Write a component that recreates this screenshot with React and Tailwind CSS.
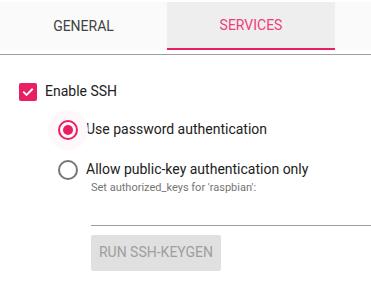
export default function App() {
  return (
    <div className="w-[371px] h-[282px] overflow-hidden bg-white font-['Roboto',sans-serif] text-[#212121]">
      <div className="pt-[2px]">
        <div className="flex h-[48px] bg-[#fafafa]">
          <div className="flex w-[167px] items-center justify-center text-[14px] text-[#424242]">GENERAL</div>
          <div className="flex w-[168px] items-center justify-center border-b-2 border-[#e91e63] bg-[#eeeeee] text-[14px] text-[#ec407a]">
            SERVICES
          </div>
        </div>
      </div>
      <div className="mt-[4px] border-t border-[#9e9e9e]">
        <div className="flex items-center pl-[19px] pt-[26px]">
          <span className="flex h-[18px] w-[18px] items-center justify-center rounded-[2px] bg-[#e91e63]">
            <svg width="14" height="14" viewBox="0 0 24 24" fill="none" stroke="white" strokeWidth="3.2" strokeLinecap="square">
              <path d="M5 12.5l4.5 4.5L19 7.5" />
            </svg>
          </span>
          <span className="ml-[8px] text-[14px]">Enable SSH</span>
        </div>
        <div className="pl-[58px] pt-[17px]">
          <div className="flex items-center">
            <span className="relative flex h-[20px] w-[20px] items-center justify-center">
              <span className="absolute left-[-10px] top-[-10px] h-[40px] w-[40px] rounded-full bg-[#fef8fa]" />
              <span className="relative flex h-[20px] w-[20px] items-center justify-center rounded-full border-2 border-[#e91e63]">
                <span className="h-[10px] w-[10px] rounded-full bg-[#e91e63]" />
              </span>
            </span>
            <span className="ml-[8px] text-[14px]">Use password authentication</span>
          </div>
          <div className="mt-[19px] flex items-center">
            <span className="h-[20px] w-[20px] rounded-full border-2 border-[#757575]" />
            <span className="ml-[8px] text-[14px]">Allow public-key authentication only</span>
          </div>
          <div className="pl-[33px]">
            <div className="text-[11px] text-[#757575]">Set authorized_keys for 'raspbian':</div>
            <div className="mt-[28px] border-b border-[#9e9e9e]" />
            <div className="mt-[9px] flex h-[36px] w-[130px] items-center justify-center rounded-[2px] bg-[#e0e0e0] text-[14px] text-[#9e9e9e]">
              RUN SSH-KEYGEN
            </div>
          </div>
        </div>
      </div>
    </div>
  )
}
